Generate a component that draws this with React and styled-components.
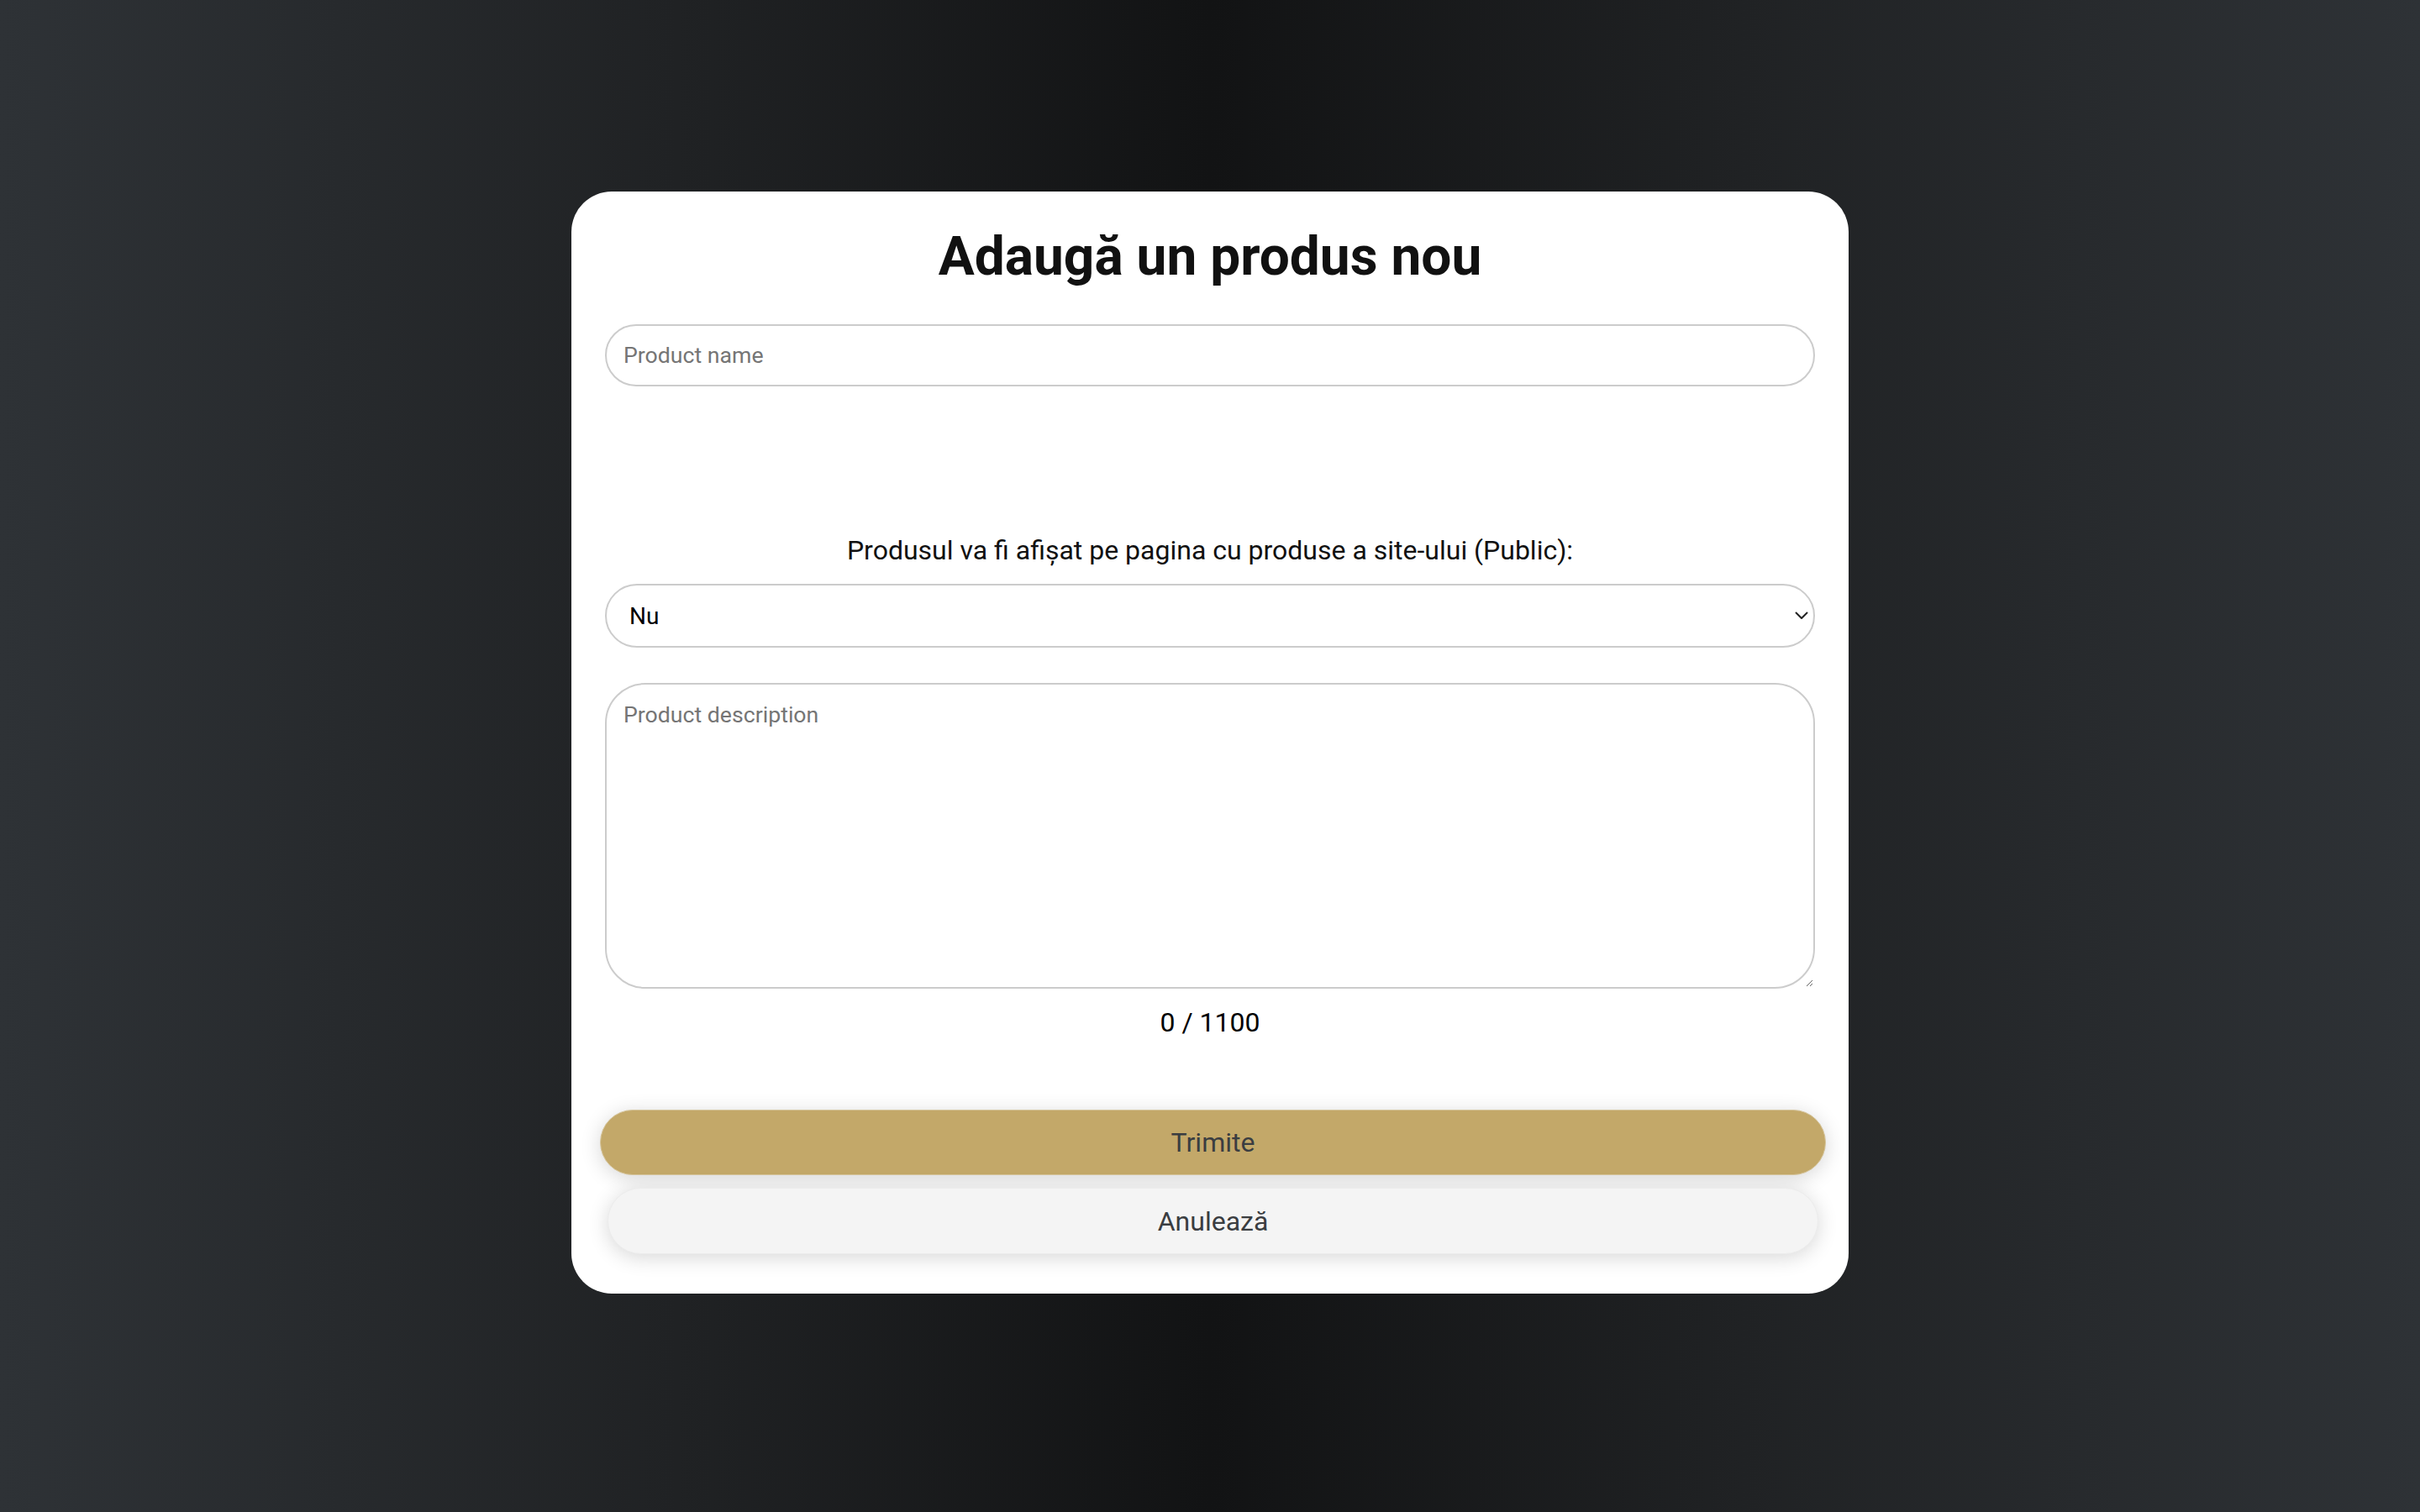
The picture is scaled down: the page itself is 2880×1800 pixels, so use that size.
import React, { useState } from "react";
import styled, { createGlobalStyle } from "styled-components";

const GlobalStyle = createGlobalStyle`
  html, body {
    margin: 0;
    padding: 0;
  }
  body {
    font-family: Roboto, "Liberation Sans", Arial, sans-serif;
    background: #1a1b1c;
  }
  * { box-sizing: border-box; }
`;

const Page = styled.main`
  min-height: 100vh;
  width: 100%;
  display: flex;
  flex-direction: column;
  align-items: center;
  padding-top: 228px;
  background: linear-gradient(90deg, #2e3236 0%, #202224 28%, #121314 50%, #202224 72%, #2e3236 100%);
`;

const Card = styled.form`
  width: 1520px;
  background: #ffffff;
  border-radius: 48px;
  padding: 40px 40px 47px;
  display: flex;
  flex-direction: column;
`;

const Title = styled.h2`
  margin: 0;
  text-align: center;
  font-family: Roboto, "Liberation Sans", sans-serif;
  font-weight: 700;
  font-size: 64px;
  line-height: 75px;
  color: #111111;
`;

const fieldBase = `
  width: 100%;
  border: 2px solid #cccccc;
  background: #ffffff;
  font-family: Roboto, "Liberation Sans", sans-serif;
  font-size: 26.67px;
  color: #111;
  outline: none;
  &::placeholder { color: #757575; }
`;

const TextInput = styled.input`
  ${fieldBase}
  height: 74px;
  margin-top: 43px;
  border-radius: 37px;
  padding: 0 20px;
`;

const Spacer = styled.div`
  height: ${(p) => p.$h}px;
`;

const Label = styled.label`
  display: block;
  text-align: center;
  font-family: Roboto, "Liberation Sans", sans-serif;
  font-size: 32px;
  line-height: 38px;
  color: #111;
`;

const SelectWrap = styled.div`
  position: relative;
  margin-top: 21px;
`;

const Select = styled.select`
  ${fieldBase}
  appearance: none;
  -webkit-appearance: none;
  height: 76px;
  border-radius: 38px;
  padding: 0 40px 0 27px;
  font-size: 28px;
  color: #000;
`;

const Chevron = styled.svg`
  position: absolute;
  right: 8px;
  top: 50%;
  width: 16px;
  height: 10px;
  margin-top: -5px;
  pointer-events: none;
`;

const TextArea = styled.textarea`
  ${fieldBase}
  display: block;
  margin-top: 42px;
  height: 364px;
  border-radius: 48px;
  padding: 20px 20px;
  line-height: 32px;
  resize: vertical;
`;

const Counter = styled.div`
  margin-top: 21px;
  text-align: center;
  font-family: Roboto, "Liberation Sans", sans-serif;
  font-size: 32px;
  line-height: 38px;
  color: #000;
`;

const ButtonStack = styled.div`
  margin-top: 85px;
  margin-right: -7px;
  display: flex;
  flex-direction: column;
  gap: 15px;
`;

const Button = styled.button`
  height: ${(p) => (p.$primary ? 78 : 79)}px;
  margin: ${(p) => (p.$primary ? "0 -6px" : "0 3px")};
  border-radius: 40px;
  border: ${(p) => (p.$primary ? "1px solid #d6c59c" : "1px solid #ececec")};
  background: ${(p) => (p.$primary ? "#c3a869" : "#f4f4f4")};
  color: #3a3d41;
  font-family: Roboto, "Liberation Sans", sans-serif;
  font-size: 32px;
  cursor: pointer;
  box-shadow: 0 4px 24px rgba(0, 0, 0, 0.16);
`;

export default function App() {
  const [desc, setDesc] = useState("");
  return (
    <>
      <GlobalStyle />
      <Page>
        <Card onSubmit={(e) => e.preventDefault()}>
          <Title>Adaugă un produs nou</Title>
          <TextInput type="text" placeholder="Product name" />
          <Spacer $h={176} />
          <Label htmlFor="public">
            Produsul va fi afișat pe pagina cu produse a site-ului (Public):
          </Label>
          <SelectWrap>
            <Select id="public" defaultValue="nu">
              <option value="nu">Nu</option>
              <option value="da">Da</option>
            </Select>
            <Chevron viewBox="0 0 16 10" fill="none">
              <path d="M1.5 1.5 L8 8 L14.5 1.5" stroke="#222" strokeWidth="2" strokeLinecap="round" strokeLinejoin="round" />
            </Chevron>
          </SelectWrap>
          <TextArea
            placeholder="Product description"
            maxLength={1100}
            value={desc}
            onChange={(e) => setDesc(e.target.value)}
          />
          <Counter>{desc.length} / 1100</Counter>
          <ButtonStack>
            <Button type="submit" $primary>Trimite</Button>
            <Button type="button">Anulează</Button>
          </ButtonStack>
        </Card>
      </Page>
    </>
  );
}
